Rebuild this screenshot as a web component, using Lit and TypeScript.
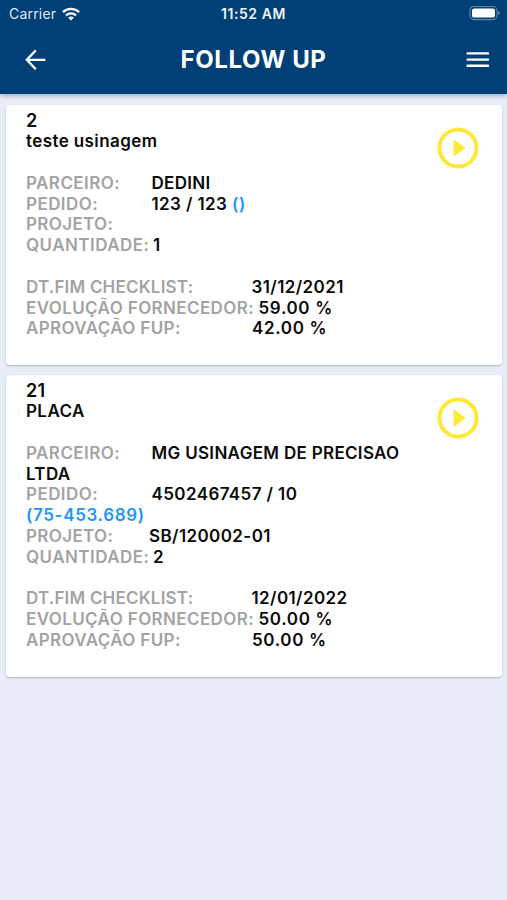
import { LitElement, html, css, nothing } from "lit";
import { customElement, property } from "lit/decorators.js";

interface Order {
  id: string;
  title: string;
  partner: string;
  order: string;
  ref: string;
  project: string;
  amount: string;
  due: string;
  progress: string;
  approval: string;
}

const ORDERS: Order[] = [
  {
    id: "2", title: "teste usinagem", partner: "DEDINI", order: "123 / 123", ref: "()",
    project: "", amount: "1", due: "31/12/2021", progress: "59.00 %", approval: "42.00 %",
  },
  {
    id: "21", title: "PLACA", partner: "MG USINAGEM DE PRECISAO LTDA", order: "4502467457 / 10",
    ref: "(75-453.689)", project: "SB/120002-01", amount: "2", due: "12/01/2022",
    progress: "50.00 %", approval: "50.00 %",
  },
];

@customElement("status-bar")
export class StatusBar extends LitElement {
  static styles = css`
    :host {
      display: grid;
      grid-template-columns: 1fr auto 1fr;
      align-items: center;
      height: 27px;
      padding: 0 7px 0 9px;
      font-size: 14px;
      line-height: 27px;
    }
    .carrier { display: flex; align-items: center; gap: 6px; letter-spacing: 0.2px; color: #dfe9f2; }
    .time { font-weight: 600; font-size: 14px; letter-spacing: 0.55px; margin-right: 2px; color: #eef4f9; }
    .battery { justify-self: end; }
    svg { display: block; }
  `;
  render() {
    return html`
      <div class="carrier">
        <span>Carrier</span>
        <svg width="18" height="14" viewBox="0 0 18 14" fill="none" stroke="#fff" stroke-width="2.3">
          <path d="M0.9 5.1 A11.6 11.6 0 0 1 17.1 5.1" />
          <path d="M4 8.3 A7.2 7.2 0 0 1 14 8.3" />
          <path d="M9 13.6 L6.2 10.8 A4 4 0 0 1 11.8 10.8 Z" fill="#fff" stroke="none" />
        </svg>
      </div>
      <div class="time">11:52 AM</div>
      <svg class="battery" width="31" height="15" viewBox="0 0 31 15">
        <rect x="1" y="0.4" width="27" height="13.2" rx="4" fill="none" stroke="#5f88ac" stroke-width="1.1" />
        <rect x="3" y="2.4" width="23" height="9.2" rx="2.2" fill="#fff" />
        <path d="M29 4.7 Q30.8 5.5 30.8 6.9 Q30.8 8.3 29 9.1 Z" fill="#5f88ac" />
      </svg>
    `;
  }
}

@customElement("app-header")
export class AppHeader extends LitElement {
  static styles = css`
    :host {
      display: grid;
      grid-template-columns: 1fr auto 1fr;
      align-items: center;
      height: 66px;
      padding: 0 17px 0 24px;
    }
    h1 {
      margin: 0 7px 0 0;
      font-size: 24px;
      line-height: 30px;
      font-weight: 700;
      letter-spacing: 0.6px;
    }
    .menu { justify-self: end; }
    svg { display: block; }
  `;
  render() {
    return html`
      <svg width="22" height="22" viewBox="0 0 22 22" fill="none" stroke="#fff" stroke-width="2.3">
        <path d="M21.4 10.8 H3 M11.8 1.4 L2.8 10.8 L11.8 20.2" />
      </svg>
      <h1>FOLLOW UP</h1>
      <svg class="menu" width="24" height="16" viewBox="0 0 24 16" fill="none" stroke="#fff" stroke-width="2.4" stroke-linecap="round">
        <path d="M1.6 1.4 H22 M1.6 7.6 H22 M1.6 13.8 H22" />
      </svg>
    `;
  }
}

@customElement("order-card")
export class OrderCard extends LitElement {
  @property({ attribute: false }) order!: Order;

  static styles = css`
    :host {
      display: flex;
      align-items: flex-start;
      justify-content: space-between;
      padding: 5px 22px 26px 20px;
      border-radius: 4px;
      background: #fff;
      box-shadow: 0 1px 2px rgba(40, 50, 80, 0.3);
      font-size: 17px;
      line-height: 20.8px;
      font-weight: 640;
      letter-spacing: 0.4px;
      color: #0a0a0a;
    }
    .body { width: 392px; }
    .id { font-size: 18px; line-height: 21.5px; }
    .group { margin-top: 20.8px; }
    .label { display: inline-block; color: #a3a3a3; font-weight: 600; letter-spacing: 0.44px; }
    .partner { letter-spacing: 0.32px; }
    .progress, .approval { letter-spacing: 0.65px; }
    .partner .label { width: 125.5px; }
    .order .label { width: 125.5px; }
    .project .label { width: 123px; letter-spacing: 0.36px; }
    .amount .label { width: 127px; }
    .due .label { width: 225.5px; letter-spacing: 0.2px; }
    .progress .label { width: 232.5px; letter-spacing: 0.38px; }
    .approval .label { width: 226px; letter-spacing: 0.36px; }
    .ref { color: #2196f3; white-space: nowrap; letter-spacing: 0.65px; }
    .play { flex: none; display: block; margin-top: 16.5px; }
  `;

  private row(kind: string, label: string, value: string, ref?: string) {
    return html`<div class=${kind}><span class="label">${label}</span>${value}${ref ? html` <span class="ref">${ref}</span>` : nothing}</div>`;
  }

  render() {
    const o = this.order;
    return html`
      <div class="body">
        <div class="id">${o.id}</div>
        <div class="title">${o.title}</div>
        <div class="group">
          ${this.row("partner", "PARCEIRO:", o.partner)}
          ${this.row("order", "PEDIDO:", o.order, o.ref)}
          ${this.row("project", "PROJETO:", o.project)}
          ${this.row("amount", "QUANTIDADE:", o.amount)}
        </div>
        <div class="group">
          ${this.row("due", "DT.FIM CHECKLIST:", o.due)}
          ${this.row("progress", "EVOLUÇÃO FORNECEDOR:", o.progress)}
          ${this.row("approval", "APROVAÇÃO FUP:", o.approval)}
        </div>
      </div>
      <svg class="play" width="44" height="44" viewBox="0 0 44 44">
        <circle cx="22" cy="22" r="18.6" fill="none" stroke="#ffe838" stroke-width="4" />
        <path d="M17.6 13 L29.6 22 L17.6 31 Z" fill="#ffe838" />
      </svg>
    `;
  }
}

@customElement("app-root")
export class AppRoot extends LitElement {
  static styles = css`
    :host {
      display: flex;
      flex-direction: column;
      height: 900px;
      background: #e8edf7;
      font-family: Inter, "Liberation Sans", sans-serif;
    }
    .top {
      flex: none;
      height: 94px;
      background: #004077;
      color: #fff;
      box-shadow: 0 1px 5px rgba(40, 50, 70, 0.45);
    }
    .list {
      display: flex;
      flex-direction: column;
      gap: 9.5px;
      padding: 10.8px 5px 0 6px;
    }
  `;
  render() {
    return html`
      <div class="top">
        <status-bar></status-bar>
        <app-header></app-header>
      </div>
      <div class="list">${ORDERS.map((o) => html`<order-card .order=${o}></order-card>`)}</div>
    `;
  }
}
